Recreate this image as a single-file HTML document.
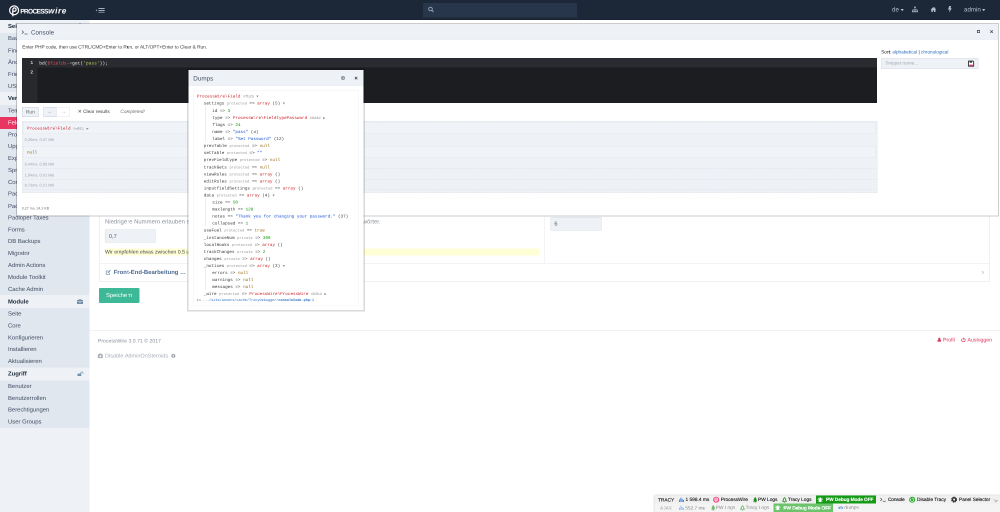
<!DOCTYPE html>
<html lang="de"><head>
<meta charset="utf-8">
<title>Feld bearbeiten: pass • ProcessWire</title>
<style>
*{box-sizing:border-box;margin:0;padding:0}
html,body{width:1000px;height:512px;overflow:hidden;background:#fff}
body{position:relative;text-rendering:geometricPrecision;font-family:"Liberation Sans",sans-serif;color:#4a5668;font-size:5.73px;line-height:1}
.abs{position:absolute}
.t{position:absolute;white-space:nowrap;line-height:1;transform:translateY(-50%)}
.mono{font-family:"Liberation Mono",monospace}
/* masthead */
#nav{position:absolute;left:0;top:0;width:1000px;height:19.75px;background:#1c2837;z-index:2;border-bottom:0.5px solid #152030}
#nav .t{color:#b9c2cd;font-size:6.2px}
#search{position:absolute;left:423px;top:3px;width:154px;height:14.5px;background:#27364b}
/* sidebar */
#side{position:absolute;left:0;top:19.5px;width:89.7px;height:493px;background:#eef2f6}
#side .list{position:absolute;left:0;top:0;width:89.7px;height:408.5px;background:#e1e7ef}
#side .row{position:absolute;left:0;width:89.7px;height:12px}
#side .row span{position:absolute;left:8px;top:50%;transform:translateY(-50%);font-size:5.9px;color:#3f4d61;white-space:nowrap}
#side .hd{background:#eef2f7}
#side .hd span{font-weight:bold;color:#1c2837}
#side .act{background:#e83561}
#side .act span{color:#fff}
/* main */
#main{position:absolute;left:89.7px;top:19.5px;width:910.3px;height:493px;background:#fff}

#main .box{position:absolute;left:9.3px;top:60px;width:891px;height:201.8px;border:0.6px solid #dfe5ec;background:#fff}
.hl{position:absolute;height:0.6px;background:#e3e8ef}
.inp{position:absolute;background:#eef2f7;border:0.6px solid #d6dde7;color:#555f6d;font-size:6.2px}
.inp span{position:absolute;left:3.4px;top:50%;transform:translateY(-50%)}
.desc{color:#8c939d;font-size:6.75px}
.note{position:absolute;background:#ffffd6;color:#4b4b4b;font-size:5.5px;white-space:nowrap;overflow:hidden}
.note span{position:absolute;left:0;top:50%;transform:translateY(-50%)}
#save{position:absolute;left:9.3px;top:268.4px;width:40.4px;height:14.9px;background:#3eb998;border-radius:1px}
#save span{position:absolute;left:0;right:0;top:50%;transform:translateY(-50%);text-align:center;color:#fff;font-size:6.3px}

/* tracy panels */
.panel{position:absolute;background:#fff;background-clip:padding-box;border:1.1px solid rgba(0,0,0,.2)}
#dumps{border:1.7px solid rgba(0,0,0,.15)}
.panel .bar{position:absolute;left:0;top:0;right:0;background:#eef2f7;border-bottom:0.6px solid #d9e0ea}
.panel .bar .t{font-size:6.3px;color:#465064}
#ed{position:absolute;background:#1c1d21;overflow:hidden}
#ed .gut{position:absolute;left:0;top:0;bottom:0;width:15.8px;background:#28292d}
#ed .al{position:absolute;left:0;right:0;top:0;height:9.2px;background:#2a2b30}
#ed .t{font-family:"Liberation Mono",monospace;font-size:4.58px;color:#e6e6e6}
.btn{position:absolute;background:#eef2f7;border:0.6px solid #c6cfdb;color:#6b6b6b;font-size:5px}
.btn span{position:absolute;left:0;right:0;top:50%;transform:translateY(-50%);text-align:center}
#res{position:absolute;background:#eef1f6;border:0.5px dashed #dde1e7}
#res .it{position:absolute;left:0.6px;right:1.4px;border:0.5px dashed #dfe3e9;background:#f0f3f8}
#res .sep{position:absolute;left:0;right:0;height:0;border-top:0.5px dashed #dde1e7}
#res .tm{font-size:4.15px;color:#a3a8b0}
.d{font-family:"Liberation Mono",monospace;font-size:4.28px;color:#3a3a3a}
.d .o{color:#d0242c}.d .g{color:#999;font-size:3.7px}.d .n{color:#009a00}.d .s{color:#1a53d6}.d .u{color:#9a6a12}.d .k{color:#c22}.d .a{color:#888;font-size:3.6px}

#tracy{position:absolute;left:654.6px;top:495.7px;width:345.4px;height:16.3px;background:#f0f0f0;box-shadow:0 0 2px rgba(0,0,0,.25)}
#tracy .t{font-size:5.15px;color:#111;-webkit-text-stroke:0.1px}
#tracy .r2 .t,#tracy .t.r2{color:#8a8a8a;-webkit-text-stroke:0}
</style>
</head>
<body class="">
<div id="o" style="position:absolute;left:0;top:0;width:2000px;height:1024px;transform:scale(0.5);transform-origin:0 0;will-change:transform"><div id="w" style="position:absolute;left:0;top:0;width:1000px;height:512px;zoom:2">
<div id="nav">
<svg class="abs" style="left:8.4px;top:5.2px" width="11.2" height="11.6" viewBox="0 0 24 25"><circle cx="12" cy="11.5" r="9.6" fill="none" stroke="#fff" stroke-width="2.6"></circle><path d="M9.2 23.5V9.6a3.6 3.6 0 1 1 3.6 3.9h-1.2" fill="none" stroke="#fff" stroke-width="2.7" stroke-linecap="round"></path></svg>
<span class="t" style="left: 20.2px; top: 11.1px; font-size: 6.6px; font-weight: bold; color: rgb(255, 255, 255); letter-spacing: -0.68px; margin-top: 0.6px;">PROCESS</span>
<span class="t" style="left: 48.1px; top: 11.1px; font-size: 8.2px; font-weight: bold; font-style: italic; color: rgb(255, 255, 255); letter-spacing: 0.62px; margin-top: -0.33px;">wire</span>
<svg class="abs" style="left:95.4px;top:7.8px" width="9.4" height="4.8" viewBox="0 0 19 9.6"><path d="M2.6 2.6 0.4 4.8 2.6 7z" fill="#b9c3cf"></path><path d="M6 1h12.5M6 4.8h12.5M6 8.6h12.5" stroke="#b9c3cf" stroke-width="1.7"></path></svg>
<div id="search"><svg class="abs" style="left:5px;top:3.6px" width="6" height="6" viewBox="0 0 12 12"><circle cx="5" cy="5" r="3.6" fill="none" stroke="#9ba7b6" stroke-width="1.8"></circle><path d="M7.6 7.6 11 11" stroke="#9ba7b6" stroke-width="2"></path></svg></div>
<span class="t" style="left: 892px; top: 9.7px;">de</span>
<svg class="abs" style="left:900.5px;top:9.1px" width="3.4" height="2.2" viewBox="0 0 6 4"><path d="M0 0h6L3 4z" fill="#b4bdc9"></path></svg>
<svg class="abs" style="left:912.2px;top:6.6px" width="6" height="5.8" viewBox="0 0 12 12"><path d="M4.5 0h3v3.2h-3zM0 8.4h3.2V12H0zM4.4 8.4h3.2V12H4.4zM8.8 8.4H12V12H8.800zM5.5 3h1v3h-1zM1.200 5.700h9.600v1H1.200zM1.200 5.700h1v3h-1zM9.800 5.700h1v3h-1zM5.500 5.700h1v3h-1z" fill="#b4bdc9"></path></svg>
<svg class="abs" style="left:930.6px;top:6.8px" width="5.8" height="5.2" viewBox="0 0 12 11"><path d="M6 0 0 5.600h1.600V11h3.200V7.200h2.400V11h3.200V5.600H12L9.800 3.500V.8H8.400v1.500z" fill="#b4bdc9"></path></svg>
<svg class="abs" style="left:948.2px;top:6.200px" width="3.800" height="6.800" viewBox="0 0 7 13"><path d="M2.200 0H6L4.300 4.400H7L2 13l1-6H0z" fill="#b4bdc9"></path></svg>
<span class="t" style="left: 964px; top: 9.7px;">admin</span>
<svg class="abs" style="left:981.9px;top:9.1px" width="3.400" height="2.200" viewBox="0 0 6 4"><path d="M0 0h6L3 4z" fill="#b4bdc9"></path></svg>
</div>
<div id="side"><div class="list" style="height: 408.31px;">
<div class="row hd" style="top: 0px; height: 13.27px;"><span class="" style="margin-top: 0.53px;">Seiten</span><svg class="abs" style="left:77.200px;top:3.800px" width="6" height="5" viewBox="0 0 12 10"><path d="M4.500 0h3v3h-3zM0 7h3v3H0zM4.500 7h3v3h-3zM9 7h3v3H9zM5.500 3h1v4h-1zM1 4.800h10v1H1zM1 4.800h1V7H1zM10 4.800h1V7h-1z" fill="#7590a9"></path></svg></div>
<div class="row " style="top: 13.27px; height: 11.88px;"><span class="" style="margin-top: -0.13px;">Baum</span></div>
<div class="row " style="top: 25.15px; height: 11.88px;"><span class="" style="margin-top: 0.29px;">Finden</span></div>
<div class="row " style="top: 37.02px; height: 11.88px;"><span class="" style="margin-top: 0.04px;">Änderungen</span></div>
<div class="row " style="top: 48.9px; height: 11.88px;"><span class="" style="margin-top: 0.13px;">Friends</span></div>
<div class="row " style="top: 60.78px; height: 11.88px;"><span class="" style="margin-top: 0.34px;">USERS</span></div>
<div class="row hd" style="top: 72.65px; height: 12.91px;"><span class="" style="margin-top: 0.08px;">Verwaltung</span><svg class="abs" style="left:77.200px;top:3.800px" width="5.600" height="5.600" viewBox="0 0 10 10"><path d="M1 9l4.500-4.500" stroke="#7590a9" stroke-width="2" stroke-linecap="round"></path><circle cx="7" cy="3" r="2.600" fill="#7590a9"></circle><path d="M7 3 10 0v3z" fill="#eef2f7"></path></svg></div>
<div class="row " style="top: 85.56px; height: 11.88px;"><span class="" style="margin-top: 0.16px;">Templates</span></div>
<div class="row act" style="top: 97.44px; height: 11.88px;"><span class="" style="margin-top: 0.05px;">Felder</span></div>
<div class="row " style="top: 109.32px; height: 11.88px;"><span class="" style="margin-top: 0.28px;">Protokolle</span></div>
<div class="row " style="top: 121.19px; height: 11.88px;"><span class="" style="margin-top: -0.1px;">Upgrades</span></div>
<div class="row " style="top: 133.07px; height: 11.88px;"><span class="" style="margin-top: 0.06px;">Export</span></div>
<div class="row " style="top: 144.95px; height: 11.88px;"><span class="" style="margin-top: 0.34px;">Sprachen</span></div>
<div class="row " style="top: 156.83px; height: 11.88px;"><span class="" style="margin-top: 0.2px;">Comments</span></div>
<div class="row " style="top: 168.7px; height: 11.88px;"><span class="" style="margin-top: 0.1px;">Padloper</span></div>
<div class="row " style="top: 180.58px; height: 11.88px;"><span class="" style="margin-top: 0.39px;">Padloper Orders</span></div>
<div class="row " style="top: 192.46px; height: 11.88px;"><span class="" style="margin-top: 0.23px;">Padloper Taxes</span></div>
<div class="row " style="top: 204.33px; height: 11.88px;"><span class="" style="margin-top: 0.39px;">Forms</span></div>
<div class="row " style="top: 216.21px; height: 11.88px;"><span class="" style="margin-top: 0.05px;">DB Backups</span></div>
<div class="row " style="top: 228.09px; height: 11.88px;"><span class="" style="margin-top: 0.16px;">Migrator</span></div>
<div class="row " style="top: 239.96px; height: 11.88px;"><span class="" style="margin-top: 0.13px;">Admin Actions</span></div>
<div class="row " style="top: 251.84px; height: 11.88px;"><span class="" style="margin-top: 0.32px;">Module Toolkit</span></div>
<div class="row " style="top: 263.72px; height: 11.88px;"><span class="" style="margin-top: 0.44px;">Cache Admin</span></div>
<div class="row hd" style="top: 275.6px; height: 12.91px;"><span class="" style="margin-top: 0.26px;">Module</span><svg class="abs" style="left:77.2px;top:3.7px" width="6" height="5" viewBox="0 0 12 10"><path d="M4 2V.6h4V2" fill="none" stroke="#7590a9" stroke-width="1.100"></path><path d="M0 2h12v3H0zM0 5.800h4.800v1.200h2.400V5.800H12V10H0z" fill="#7590a9"></path></svg></div>
<div class="row " style="top: 288.5px; height: 11.88px;"><span class="" style="margin-top: 0.27px;">Seite</span></div>
<div class="row " style="top: 300.38px; height: 11.88px;"><span class="" style="margin-top: 0.04px;">Core</span></div>
<div class="row " style="top: 312.26px; height: 11.88px;"><span class="" style="margin-top: 0.21px;">Konfigurieren</span></div>
<div class="row " style="top: 324.14px; height: 11.88px;"><span class="" style="margin-top: 0.03px;">Installieren</span></div>
<div class="row " style="top: 336.01px; height: 11.88px;"><span class="" style="margin-top: 0.17px;">Aktualisieren</span></div>
<div class="row hd" style="top: 347.89px; height: 12.91px;"><span class="" style="margin-top: 0.11px;">Zugriff</span><svg class="abs" style="left:77.300px;top:4px" width="6.200" height="4.600" viewBox="0 0 12.400 9.200"><rect x="0" y="4.200" width="7.600" height="5" rx=".6" fill="#7590a9"></rect><path d="M6.400 4.400V3.200a2.300 2.300 0 0 1 4.600 0v1.600" fill="none" stroke="#7590a9" stroke-width="1.300"></path></svg></div>
<div class="row " style="top: 360.8px; height: 11.88px;"><span class="" style="margin-top: 0.07px;">Benutzer</span></div>
<div class="row " style="top: 372.68px; height: 11.88px;"><span class="" style="margin-top: 0.34px;">Benutzerrollen</span></div>
<div class="row " style="top: 384.55px; height: 11.88px;"><span class="" style="margin-top: 0.03px;">Berechtigungen</span></div>
<div class="row " style="top: 396.43px; height: 11.88px;"><span class="" style="margin-top: 0.31px;">User Groups</span></div>
</div></div>
<div id="main">
<div class="box"></div>
<span class="t desc" style="left: 15.3px; top: 202.1px; font-size: 5.95px; margin-top: 0.2px;">Niedrigere Nummern erlauben schwächere Passwörter, höhere Nummern erfordern stärkere Passwörter.</span>
<div class="inp" style="left:15.299999999999997px;top:209.9px;width:50.6px;height:13.1px"><span class="" style="font-size: 5.7px; margin-top: 0.96px;">0,7</span></div>
<div class="note" style="left:15.299999999999997px;top:228.9px;width:433.8px;height:6.9px"><span class="" style="font-size: 5.2px; margin-top: 0.41px;">Wir empfehlen etwas zwischen 0.5 und 1.0 zu verwenden.</span></div>
<div class="abs" style="left:454.59999999999997px;top:180.5px;width:0.6px;height:63px;background:#e3e8ef"></div>
<span class="t desc" style="left: 460.8px; top: 188.5px; font-size: 5.95px; margin-top: 0.14px;">Minimale Anzahl an Zeichen</span>
<div class="inp" style="left:460.8px;top:197.5px;width:51px;height:13.3px"><span class="" style="font-size: 5.7px; margin-top: 0.61px;">6</span></div>
<div class="hl" style="left:9.299999999999997px;top:243.3px;width:891px"></div>
<svg class="abs" style="left:15.700000000000003px;top:249.89999999999998px" width="5.6" height="5.4" viewBox="0 0 11 11"><path d="M8 6.500V9.800H1.200V3H5" fill="none" stroke="#6f87a8" stroke-width="1.300"></path><path d="M4.500 5.400 9 .8l1.400 1.400L5.900 6.800 4.200 7.200z" fill="#6f87a8"></path></svg>
<span class="t" style="left: 24px; top: 252.7px; font-size: 5.92px; font-weight: bold; color: rgb(77, 106, 146); margin-top: 0.53px;">Front-End-Bearbeitung …</span>
<svg class="abs" style="left:891.6999999999999px;top:250.8px" width="2.400" height="3.800" viewBox="0 0 5 8"><path d="M1 1l3 3-3 3" fill="none" stroke="#b7c3d3" stroke-width="1.600"></path></svg>
<div id="save"><span class="" style="font-size: 5.85px; margin-top: 0.34px;">Speichern</span></div>
<div class="hl" style="left:0;top:310.3px;width:911px;background:#dfe5ed"></div>
<span class="t" style="left: 8.2px; top: 321.1px; font-size: 5.15px; color: rgb(138, 145, 156); margin-top: 0.97px;">ProcessWire 3.0.71 © 2017</span>
<svg class="abs" style="left:7.700000000000003px;top:333.7px" width="5.6" height="5.400" viewBox="0 0 11 11"><path d="M1.500 2.500h8a1 1 0 0 1 1 1v6a1 1 0 0 1-1 1h-8a1 1 0 0 1-1-1v-6a1 1 0 0 1 1-1zM3.500 2.500V1h4v1.500" fill="#a9aeb6"></path><path d="M5.500 4.200v4.600M3.200 6.500h4.600" stroke="#fff" stroke-width="1.400"></path></svg>
<span class="t" style="left: 15.3px; top: 336.5px; font-size: 5.54px; color: rgb(169, 174, 182); margin-top: 0.62px;">Disable AdminOnSteroids</span>
<svg class="abs" style="left:81.3px;top:334.1px" width="4.600" height="4.600" viewBox="0 0 10 10"><circle cx="5" cy="5" r="3.300" fill="none" stroke="#9a9fa8" stroke-width="2.600" stroke-dasharray="1.700 0.900"></circle><circle cx="5" cy="5" r="2.700" fill="none" stroke="#9a9fa8" stroke-width="1.800"></circle></svg>
<svg class="abs" style="left:847.9px;top:318.1px" width="3.600" height="4.200" viewBox="0 0 8 9"><circle cx="4" cy="2.200" r="2.200" fill="#e0325d"></circle><path d="M0 9V7a3 2.500 0 0 1 8 0v2z" fill="#e0325d"></path></svg>
<span class="t" style="left: 853.3px; top: 320.9px; font-size: 5.2px; color: rgb(224, 50, 93);">Profil</span>
<svg class="abs" style="left:871.5px;top:318.1px" width="4.800" height="4.800" viewBox="0 0 10 10"><path d="M3 2.200a3.700 3.700 0 1 0 4 0" fill="none" stroke="#e0325d" stroke-width="1.500"></path><path d="M5 .4v4" stroke="#e0325d" stroke-width="1.500"></path></svg>
<span class="t" style="left: 877.8px; top: 320.9px; font-size: 5.2px; color: rgb(224, 50, 93);">Ausloggen</span>
</div>
<div class="panel" id="console" style="left: 16px; top: 22.9px; width: 982.9px; height: 193.5px;">
<div class="bar" style="height:15.6px">
<svg class="abs" style="left: 4.6px; top: 6.3px;" width="6.4" height="4.6" viewBox="0 0 13 9"><path d="M1 1l3 3.200L1 7.400" fill="none" stroke="#3d4656" stroke-width="1.300"></path><path d="M6 8h6.500" stroke="#3d4656" stroke-width="1.300"></path></svg>
<span class="t" style="left: 14px; top: 8.8px; margin-top: -0.4px;">Console</span>
<svg class="abs" style="left: 959.8px; top: 6px;" width="3.200" height="3.200" viewBox="0 0 6 6"><rect x=".8" y=".8" width="4.400" height="4.400" fill="none" stroke="#3d4656" stroke-width="1.500"></rect></svg>
<svg class="abs" style="left: 972.8px; top: 6px;" width="3.200" height="3.200" viewBox="0 0 6 6"><path d="M.7.7l4.600 4.600M5.300.7.7 5.300" stroke="#3d4656" stroke-width="1.400"></path></svg>
</div>
<span class="t" style="left: 5.3px; top: 23.1px; font-size: 4.74px; color: rgb(59, 59, 59); margin-top: 0.36px;">Enter PHP code, then use CTRL/CMD+Enter to Run, or ALT/OPT+Enter to Clear &amp; Run.</span>
<div id="ed" style="left: 4.8px; top: 34.2px; width: 855px; height: 45.1px;">
<div class="al"></div><div class="gut"></div>
<span class="t" style="left: 8.6px; top: 4.8px; color: rgb(216, 216, 216); font-weight: bold; margin-top: 0.11px;">1</span>
<span class="t" style="left: 8.6px; top: 13.8px; color: rgb(216, 216, 216); font-weight: bold; margin-top: 0.7px;">2</span>
<span class="t" style="left: 17.4px; top: 4.8px; margin-top: 0.46px;">bd(<span style="color:#e0525a">$fields</span><span style="color:#9aa">-&gt;</span>get(<span style="color:#b5c45a">'pass'</span>));</span>
</div>
<div class="btn" style="left: 5px; top: 83.3px; width: 16.6px; height: 9.7px;"><span class="" style="margin-top: 0.49px;">Run</span></div>
<div class="btn" style="left: 26.3px; top: 83.3px; width: 13.6px; height: 9.7px;"><span class="" style="margin-top: 0.18px;">←</span></div>
<div class="btn" style="left: 39.3px; top: 83.3px; width: 13.8px; height: 9.7px; background: rgb(255, 255, 255); border-color: rgb(228, 232, 238); color: rgb(153, 153, 153);"><span class="" style="margin-top: 0.2px;">→</span></div>
<span class="t" style="left: 60.8px; top: 87.7px; font-size: 4.75px; color: rgb(68, 68, 68); margin-top: 0.28px;">✕ Clear results</span>
<span class="t" style="left: 103.4px; top: 87.7px; font-size: 4.75px; color: rgb(119, 119, 119); font-style: italic; margin-top: 0.47px;">Completed!</span>
<div id="res" style="left: 5px; top: 97px; width: 855.6px; height: 72px;">
<div class="it" style="top:0.8px;height:11.6px"><span class="t d" style="left: 3.4px; top: 5.6px; margin-top: 0.49px;"><span class="o">ProcessWire\Field</span> <span class="a">#a011</span> <span class="a">▶</span></span></div>
<span class="t tm" style="left: 2.1px; top: 18.2px; font-size: 3.9px; margin-top: 0.38px;">0,26ms, 0.07 MB</span>
<div class="it" style="top:24.6px;height:11.6px"><span class="t d" style="left: 3.4px; top: 5.6px; margin-top: 0.23px;"><span class="u">null</span></span></div>
<span class="t tm" style="left: 2.1px; top: 42.6px; font-size: 3.9px; margin-top: 0.47px;">0,44ms, 0.00 MB</span>
<div class="sep" style="top:47.2px"></div>
<span class="t tm" style="left: 2.1px; top: 53.6px; font-size: 3.9px; margin-top: 0.41px;">1,04ms, 0.01 MB</span>
<div class="sep" style="top:57.6px"></div>
<span class="t tm" style="left: 2.1px; top: 64px; font-size: 3.9px;">9,73ms, 0.21 MB</span>
<div class="sep" style="top:68.3px"></div>
</div>
<span class="t" style="left: 4.8px; top: 184.5px; font-size: 3.57px; color: rgb(119, 119, 119); margin-top: 0.51px;">0,27 ms, 24,3 KB</span>
<span class="t" style="left: 864.2px; top: 28.3px; font-size: 4.66px; color: rgb(34, 34, 34); margin-top: 0.4px;">Sort: <span style="color:#2f6fbd">alphabetical</span> | <span style="color:#2f6fbd">chronological</span></span>
<div class="inp" style="left: 864.2px; top: 33.9px; width: 97.4px; height: 11px; font-size: 5px; color: rgb(165, 171, 179);"><span style="left: 3.6px; font-size: 4.69px; margin-top: 0.3px;" class="">Snippet name...</span>
<svg class="abs" style="left:86.4px;top:2.400px" width="6.200" height="6.200" viewBox="0 0 12 12"><path d="M1 1h8.500L11 2.500V11H1z" fill="#fff" stroke="#222" stroke-width="1.600"></path><rect x="3" y="1" width="5" height="3.200" fill="#333"></rect><rect x="2.600" y="8" width="6.800" height="2.600" fill="#d23a6a"></rect></svg></div>
</div>
<div class="panel" id="dumps" style="left: 187.1px; top: 68.3px; width: 177.8px; height: 243.3px;">
<div class="bar" style="height:15.6px">
<span class="t" style="left: 4.7px; top: 8.7px; margin-top: -0.2px;">Dumps</span>
<svg class="abs" style="left: 152.9px; top: 6.5px;" width="3.200" height="3.200" viewBox="0 0 6 6"><rect x=".8" y=".8" width="4.400" height="4.400" fill="none" stroke="#3d4656" stroke-width="1.500"></rect></svg>
<svg class="abs" style="left: 166.1px; top: 6.5px;" width="3.200" height="3.200" viewBox="0 0 6 6"><path d="M.7.7l4.600 4.600M5.300.7.7 5.300" stroke="#3d4656" stroke-width="1.400"></path></svg>
</div>
<div class="abs" style="left: 4.7px; top: 20px; width: 165.4px; height: 216.3px; border: 0.5px dotted rgb(226, 228, 232);"></div>
<span class="t d" style="left: 8.3px; top: 26.7px; margin-top: 0.71px;"><span class="o">ProcessWire\Field</span> <span class="a">#fb25</span> <span class="a">▼</span></span>
<span class="t d" style="left: 15.2px; top: 33.75px; margin-top: 0.43px;">settings <span class="g">protected</span> =&gt; <span class="k">array</span> (5) <span class="a">▼</span></span>
<span class="t d" style="left: 23.7px; top: 40.81px; margin-top: 0.19px;">id =&gt; <span class="n">3</span></span>
<span class="t d" style="left: 23.7px; top: 47.86px; margin-top: 0.88px;">type =&gt; <span class="o">ProcessWire\FieldtypePassword</span> <span class="a">#6d4d</span> <span class="a">▶</span></span>
<span class="t d" style="left: 23.7px; top: 54.92px; margin-top: 0.17px;">flags =&gt; <span class="n">24</span></span>
<span class="t d" style="left: 23.7px; top: 61.97px; margin-top: 0.17px;">name =&gt; <span class="s">"pass"</span> (4)</span>
<span class="t d" style="left: 23.7px; top: 69.03px; margin-top: 0.16px;">label =&gt; <span class="s">"Set Password"</span> (12)</span>
<span class="t d" style="left: 15.2px; top: 76.08px; margin-top: 0.43px;">prevTable <span class="g">protected</span> =&gt; <span class="u">null</span></span>
<span class="t d" style="left: 15.2px; top: 83.14px; margin-top: 0.5px;">setTable <span class="g">protected</span> =&gt; <span class="s">""</span></span>
<span class="t d" style="left: 15.2px; top: 90.19px; margin-top: 0.63px;">prevFieldtype <span class="g">protected</span> =&gt; <span class="u">null</span></span>
<span class="t d" style="left: 15.2px; top: 97.25px; margin-top: 0.89px;">trackGets <span class="g">protected</span> =&gt; <span class="u">null</span></span>
<span class="t d" style="left: 15.2px; top: 104.3px; margin-top: 0.68px;">viewRoles <span class="g">protected</span> =&gt; <span class="k">array</span> ()</span>
<span class="t d" style="left: 15.2px; top: 111.36px; margin-top: 0.84px;">editRoles <span class="g">protected</span> =&gt; <span class="k">array</span> ()</span>
<span class="t d" style="left: 15.2px; top: 118.41px; margin-top: 0.93px;">inputfieldSettings <span class="g">protected</span> =&gt; <span class="k">array</span> ()</span>
<span class="t d" style="left: 15.2px; top: 125.47px; margin-top: 0.69px;">data <span class="g">protected</span> =&gt; <span class="k">array</span> (4) <span class="a">▼</span></span>
<span class="t d" style="left: 23.7px; top: 132.52px; margin-top: 0.19px;">size =&gt; <span class="n">50</span></span>
<span class="t d" style="left: 23.7px; top: 139.58px; margin-top: 0.25px;">maxlength =&gt; <span class="n">128</span></span>
<span class="t d" style="left: 23.7px; top: 146.64px; margin-top: 0.21px;">notes =&gt; <span class="s">"Thank you for changing your password."</span> (37)</span>
<span class="t d" style="left: 23.7px; top: 153.69px; margin-top: 0.12px;">collapsed =&gt; <span class="n">1</span></span>
<span class="t d" style="left: 15.2px; top: 160.74px; margin-top: 0.41px;">useFuel <span class="g">protected</span> =&gt; <span class="u">true</span></span>
<span class="t d" style="left: 15.2px; top: 167.8px; margin-top: 0.66px;">_instanceNum <span class="g">private</span> =&gt; <span class="n">306</span></span>
<span class="t d" style="left: 15.2px; top: 174.86px; margin-top: 0.74px;">localHooks <span class="g">protected</span> =&gt; <span class="k">array</span> ()</span>
<span class="t d" style="left: 15.2px; top: 181.91px; margin-top: 0.8px;">trackChanges <span class="g">private</span> =&gt; <span class="n">2</span></span>
<span class="t d" style="left: 15.2px; top: 188.97px; margin-top: 0.8px;">changes <span class="g">private</span> =&gt; <span class="k">array</span> ()</span>
<span class="t d" style="left: 15.2px; top: 196.02px; margin-top: 0.53px;">_notices <span class="g">protected</span> =&gt; <span class="k">array</span> (3) <span class="a">▼</span></span>
<span class="t d" style="left: 23.7px; top: 203.08px; margin-top: 0.05px;">errors =&gt; <span class="u">null</span></span>
<span class="t d" style="left: 23.7px; top: 210.13px; margin-top: 0px;">warnings =&gt; <span class="u">null</span></span>
<span class="t d" style="left: 23.7px; top: 217.18px; margin-top: -0.08px;">messages =&gt; <span class="u">null</span></span>
<span class="t d" style="left: 15.2px; top: 224.24px; margin-top: 0.66px;">_wire <span class="g">protected</span> =&gt; <span class="o">ProcessWire\ProcessWire</span> <span class="a">#62b4</span> <span class="a">▶</span></span>
<div class="abs" style="left:16.9px;top:36.61px;width:0.5px;height:35.02px;background:#dcdcdc"></div>
<div class="abs" style="left:16.9px;top:128.32px;width:0.5px;height:27.97px;background:#dcdcdc"></div>
<div class="abs" style="left:16.9px;top:198.88px;width:0.5px;height:20.91px;background:#dcdcdc"></div>
<span class="t" style="left: 7.9px; top: 230.1px; font-size: 3.5px; color: rgb(119, 119, 119); font-family: &quot;Liberation Mono&quot;, monospace; margin-top: 0.61px;">in <span style="color:#2a6cc4">.../site/assets/cache/TracyDebugger/<b>consoleCode.php</b>:2</span></span>
</div>
<div id="tracy">
<div class="abs" style="left:0;top:7.8px;width:345.4px;height:8.8px;background:#f4f4f4"></div>
<span class="t" style="left: 3.4px; top: 4px; font-size: 4.8px; margin-top: 0.69px;">TRACY</span>
<svg class="abs" style="left:24.4px;top:1.4px" width="5" height="5" viewBox="0 0 10 10"><path d="M0 10V5h2v5zM2.700 10V1.500h2V10zM5.400 10V3.500h2V10zM8.100 10V6h1.900v4z" fill="#4a8ad8"></path></svg>
<span class="t" style="left: 30.9px; top: 4px; font-size: 4.8px; margin-top: 0.3px;">1 598.4 ms</span>
<svg class="abs" style="left:58.4px;top:0.9px" width="6.400" height="6.400" viewBox="0 0 12 12"><circle cx="6" cy="6" r="5.600" fill="#e8336d"></circle><circle cx="6" cy="5.600" r="3.100" fill="none" stroke="#fff" stroke-width="1.200"></circle><path d="M4.600 10V5.600a1.400 1.400 0 1 1 1.400 1.500" fill="none" stroke="#fff" stroke-width="1.100"></path></svg>
<span class="t" style="left: 66.1px; top: 4px; font-size: 4.8px; margin-top: 0.42px;">ProcessWire</span>
<svg class="abs" style="left:98.4px;top:1.2px" width="4.400" height="5.600" viewBox="0 0 8 10"><path d="M4 0 6.500 3.200H5.500L7.300 5.600H6.200L8 8H5v2H3V8H0L1.800 5.600H.7L2.500 3.200H1.500z" fill="#1c8a1c"></path></svg>
<span class="t" style="left: 103.4px; top: 4px; font-size: 4.8px; margin-top: 0.46px;">PW Logs</span>
<svg class="abs" style="left:127.4px;top:1.2px" width="5" height="5.600" viewBox="0 0 9 10"><path d="M4.500 .8 6.600 3.600H5.800L7.400 5.800H6.500L8 8H5.300v1.600H3.700V8H1L2.500 5.800H1.600L3.200 3.600H2.400z" fill="none" stroke="#1c8a1c" stroke-width="1.100"></path></svg>
<span class="t" style="left: 133.4px; top: 4px; font-size: 4.8px; margin-top: 0.25px;">Tracy Logs</span>
<div class="abs" style="left:161.4px;top:0;width:59.8px;height:7.9px;background:#159a15"></div>
<svg class="abs" style="left:163.0px;top:1.2px" width="5.400" height="5.600" viewBox="0 0 10 10"><ellipse cx="5" cy="6" rx="2.600" ry="3.400" fill="#fff"></ellipse><circle cx="5" cy="2" r="1.600" fill="#fff"></circle><path d="M0 4.500h10M.5 7.500h9M1 1.500l2 2M9 1.500l-2 2" stroke="#fff" stroke-width="1"></path></svg>
<span class="t" style="left: 171.4px; top: 4px; color: rgb(255, 255, 255); font-weight: bold; font-size: 4.8px; margin-top: 0.47px; letter-spacing: -0.08px;">PW Debug Mode OFF</span>
<svg class="abs" style="left:225.4px;top:2.0px" width="6" height="4.200" viewBox="0 0 13 9"><path d="M1 1l3 3.200L1 7.400" fill="none" stroke="#333" stroke-width="1.300"></path><path d="M6 8h6.500" stroke="#333" stroke-width="1.300"></path></svg>
<span class="t" style="left: 233.4px; top: 4px; font-size: 4.8px; margin-top: 0.36px; letter-spacing: -0.15px;">Console</span>
<svg class="abs" style="left:254.4px;top:0.8px" width="6.400" height="6.400" viewBox="0 0 12 12"><circle cx="6" cy="6" r="5.600" fill="#17a117"></circle><path d="M4 3.600a3.200 3.200 0 1 0 4 0" fill="none" stroke="#fff" stroke-width="1.300"></path><path d="M6 2v3.600" stroke="#fff" stroke-width="1.300"></path></svg>
<span class="t" style="left: 262.4px; top: 4px; font-size: 4.8px; margin-top: 0.41px;">Disable Tracy</span>
<svg class="abs" style="left:296.4px;top:0.9px" width="6.200" height="6.200" viewBox="0 0 10 10"><circle cx="5" cy="5" r="3.400" fill="none" stroke="#2b2b2b" stroke-width="2.800" stroke-dasharray="1.780 0.890"></circle><circle cx="5" cy="5" r="2.600" fill="none" stroke="#2b2b2b" stroke-width="1.800"></circle></svg>
<span class="t" style="left: 304.4px; top: 4px; font-size: 4.8px; margin-top: 0.42px;">Panel Selector</span>
<svg class="abs" style="left:339.0px;top:2.8px" width="4.400" height="4" viewBox="0 0 9 8"><path d="M0 1l3 3M4 3.500h4.500M4 3.500V8M8.500 3.500 4 8" fill="none" stroke="#999" stroke-width="1"></path></svg>
<span class="t r2" style="left: 5.4px; top: 12.1px; color: rgb(170, 170, 170); font-size: 4.8px; margin-top: 0.47px;">AJAX</span>
<svg class="abs" style="left:24.4px;top:9.5px" width="5" height="5" viewBox="0 0 10 10"><path d="M0 10V5h2v5zM2.700 10V1.500h2V10zM5.400 10V3.500h2V10zM8.100 10V6h1.900v4z" fill="#9fc0ea"></path></svg>
<span class="t r2" style="left: 30.6px; top: 12.1px; font-size: 4.8px; margin-top: 0.75px;">552.7 ms</span>
<svg class="abs" style="left:56.4px;top:9.3px" width="4.400" height="5.600" viewBox="0 0 8 10"><path d="M4 0 6.500 3.200H5.500L7.300 5.600H6.200L8 8H5v2H3V8H0L1.800 5.600H.7L2.500 3.200H1.500z" fill="#6cba6c"></path></svg>
<span class="t r2" style="left: 61.2px; top: 12.1px; font-size: 4.8px; margin-top: 0.15px;">PW Logs</span>
<svg class="abs" style="left:85.4px;top:9.3px" width="5" height="5.600" viewBox="0 0 9 10"><path d="M4.500 .8 6.600 3.600H5.800L7.400 5.800H6.500L8 8H5.300v1.600H3.700V8H1L2.500 5.800H1.600L3.200 3.600H2.400z" fill="none" stroke="#6cba6c" stroke-width="1.100"></path></svg>
<span class="t r2" style="left: 91px; top: 12.1px; font-size: 4.8px; margin-top: 0.19px;">Tracy Logs</span>
<div class="abs" style="left:118.7px;top:7.9px;width:59.8px;height:8.500px;background:#6cc36c"></div>
<svg class="abs" style="left:120.4px;top:9.3px" width="5.400" height="5.600" viewBox="0 0 10 10"><ellipse cx="5" cy="6" rx="2.600" ry="3.400" fill="#fff"></ellipse><circle cx="5" cy="2" r="1.600" fill="#fff"></circle><path d="M0 4.500h10M.5 7.500h9M1 1.500l2 2M9 1.500l-2 2" stroke="#fff" stroke-width="1"></path></svg>
<span class="t" style="left: 128.8px; top: 12.1px; color: rgb(255, 255, 255); font-weight: bold; font-size: 4.8px; margin-top: 0.64px; letter-spacing: -0.08px;">PW Debug Mode OFF</span>
<svg class="abs" style="left:183.4px;top:10.4px" width="5.400" height="3.400" viewBox="0 0 11 7"><path d="M0 3.500Q5.500-2.500 11 3.500 5.500 9.500 0 3.500z" fill="#7aa6de"></path><circle cx="5.500" cy="3.500" r="1.700" fill="#fff"></circle><circle cx="5.500" cy="3.500" r=".9" fill="#4b7fc4"></circle></svg>
<span class="t r2" style="left: 189.8px; top: 12.1px; font-size: 4.8px; margin-top: 0.32px;">dumps</span>
</div>
</div></div>
</body></html>
